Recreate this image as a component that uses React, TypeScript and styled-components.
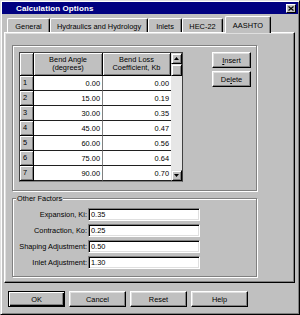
import React from 'react';
import styled, { createGlobalStyle } from 'styled-components';

const GlobalStyle = createGlobalStyle`
  html, body {
    margin: 0;
    padding: 0;
    background: #c0c0c0;
  }
  body {
    font-family: "Liberation Sans", Arial, sans-serif;
    font-size: 7.4px;
    color: #000;
  }
`;

const Window = styled.div`
  box-sizing: border-box;
  width: 300px;
  height: 315px;
  padding: 1px;
  background: #c0c0c0;
  border: 1px solid;
  border-color: #dfdfdf #000 #000 #dfdfdf;
  box-shadow: inset 1px 1px #fff, inset -1px -1px #808080;
  display: flex;
  flex-direction: column;
`;

const TitleBar = styled.div`
  height: 12px;
  background: #000080;
  display: flex;
  align-items: center;
  justify-content: space-between;
  padding: 0 2px 0 14px;
`;

const TitleText = styled.span`
  color: #fff;
  font-weight: bold;
  font-size: 8px;
  letter-spacing: 0.1px;
`;

const CloseBox = styled.div`
  box-sizing: border-box;
  width: 10px;
  height: 9px;
  background: #c0c0c0;
  border: 1px solid;
  border-color: #fff #000 #000 #fff;
  display: flex;
  align-items: center;
  justify-content: center;
`;

const TabRow = styled.div`
  display: flex;
  align-items: flex-end;
  height: 16px;
  margin-top: 2px;
  padding-left: 5px;
  position: relative;
  z-index: 1;
`;

const Tab = styled.div<{ $w: number; $active?: boolean }>`
  box-sizing: border-box;
  width: ${(p) => p.$w}px;
  height: ${(p) => (p.$active ? 17 : 14)}px;
  margin: ${(p) => (p.$active ? '0 0 -1px 2px' : '0')};
  background: #c0c0c0;
  border: 1px solid;
  border-color: #fff #000 transparent #fff;
  border-bottom: none;
  border-radius: 2px 2px 0 0;
  box-shadow: inset -1px 0 #808080;
  display: flex;
  align-items: center;
  justify-content: center;
  padding-top: ${(p) => (p.$active ? 0 : 1)}px;
  white-space: nowrap;
`;

const Panel = styled.div`
  box-sizing: border-box;
  width: 291px;
  height: 251px;
  margin-left: 2px;
  border: 1px solid;
  border-color: #fff #000 #000 #fff;
  box-shadow: inset -1px -1px #808080, inset 1px 1px #dfdfdf;
  padding: 12px 0 0 7px;
  display: flex;
  flex-direction: column;
  gap: 7px;
`;

const GroupBox = styled.div<{ $h: number }>`
  box-sizing: border-box;
  position: relative;
  width: 245px;
  height: ${(p) => p.$h}px;
  border: 1px solid #808080;
  box-shadow: inset 1px 1px #fff, 1px 1px #fff;
`;

const GroupLabel = styled.span`
  position: absolute;
  top: -5px;
  left: 3px;
  padding: 0 1px;
  background: #c0c0c0;
  line-height: 9px;
`;

const TableArea = styled.div`
  display: flex;
  padding: 6px 0 0 6px;
`;

const GridFrame = styled.div`
  box-sizing: border-box;
  width: 164px;
  height: 130px;
  border: 1px solid;
  border-color: #404040 #404040 #808080 #404040;
  display: flex;
`;

const Grid = styled.div`
  display: grid;
  grid-template-columns: 14px 69px 68px;
  grid-template-rows: 23px repeat(7, 15px);
`;

const HeadCell = styled.div<{ $left?: boolean }>`
  box-sizing: border-box;
  background: #c0c0c0;
  border-right: 1px solid #000;
  border-bottom: 1px solid #000;
  box-shadow: inset 1px 1px #fff, inset -1px -1px #808080;
  display: flex;
  align-items: center;
  justify-content: ${(p) => (p.$left ? 'flex-start' : 'center')};
  padding-left: ${(p) => (p.$left ? 3 : 0)}px;
  text-align: center;
  line-height: 8.5px;
`;

const Cell = styled.div<{ $divider?: boolean }>`
  box-sizing: border-box;
  background: #fff;
  border-bottom: 1px solid #202020;
  border-right: ${(p) => (p.$divider ? '1px solid #808080' : 'none')};
  display: flex;
  align-items: center;
  justify-content: flex-end;
  padding-right: 2px;
`;

const ScrollBar = styled.div`
  width: 11px;
  display: flex;
  flex-direction: column;
  background: #e6e6e6;
`;

const ScrollPart = styled.div<{ $h: number }>`
  box-sizing: border-box;
  height: ${(p) => p.$h}px;
  background: #c0c0c0;
  border: 1px solid;
  border-color: #dfdfdf #000 #000 #dfdfdf;
  box-shadow: inset 1px 1px #fff, inset -1px -1px #808080;
  display: flex;
  align-items: center;
  justify-content: center;
`;

const Track = styled.div`
  flex: 1;
`;

const SideButtons = styled.div`
  display: flex;
  flex-direction: column;
  gap: 3px;
  margin-left: 29px;
`;

const Button = styled.div<{ $w: number; $default?: boolean }>`
  box-sizing: border-box;
  width: ${(p) => p.$w}px;
  height: 16px;
  background: #c0c0c0;
  border: 1px solid;
  border-color: ${(p) => (p.$default ? '#000' : '#fff #000 #000 #fff')};
  box-shadow: ${(p) =>
    p.$default
      ? 'inset 1px 1px #fff, inset -1px -1px #000, inset -2px -2px #808080'
      : 'inset -1px -1px #808080, inset 1px 1px #dfdfdf'};
  display: flex;
  align-items: center;
  justify-content: center;
`;

const FactorGrid = styled.div`
  display: grid;
  grid-template-columns: 74px 112px;
  grid-auto-rows: 13px;
  column-gap: 1px;
  row-gap: 3px;
  padding-top: 9px;
`;

const FactorLabel = styled.label`
  display: flex;
  align-items: center;
  justify-content: flex-end;
  white-space: nowrap;
`;

const FactorInput = styled.div`
  box-sizing: border-box;
  background: #fff;
  border: 1px solid;
  border-color: #808080 #fff #fff #808080;
  box-shadow: inset 1px 1px #000, inset -1px -1px #dfdfdf;
  display: flex;
  align-items: center;
  padding-left: 2px;
`;

const ButtonRow = styled.div`
  display: flex;
  gap: 4px;
  margin-top: 8px;
  padding-left: 6px;
`;

const Arrow = ({ down }: { down?: boolean }) => (
  <svg width="5" height="3" viewBox="0 0 5 3">
    <polygon points={down ? '0,0 5,0 2.5,3' : '2.5,0 5,3 0,3'} fill="#000" />
  </svg>
);

const rows = [
  ['0.00', '0.00'],
  ['15.00', '0.19'],
  ['30.00', '0.35'],
  ['45.00', '0.47'],
  ['60.00', '0.56'],
  ['75.00', '0.64'],
  ['90.00', '0.70'],
];

const factors = [
  ['Expansion, Ki:', '0.35'],
  ['Contraction, Ko:', '0.25'],
  ['Shaping Adjustment:', '0.50'],
  ['Inlet Adjustment:', '1.30'],
];

const tabs: [string, number][] = [
  ['General', 43],
  ['Hydraulics and Hydrology', 98],
  ['Inlets', 34],
  ['HEC-22', 41],
];

const App: React.FC = () => (
  <>
    <GlobalStyle />
    <Window>
      <TitleBar>
        <TitleText>Calculation Options</TitleText>
        <CloseBox>
          <svg width="6" height="5" viewBox="0 0 6 5">
            <path d="M0.5 0.5 L5.5 4.5 M5.5 0.5 L0.5 4.5" stroke="#000" strokeWidth="1.2" />
          </svg>
        </CloseBox>
      </TitleBar>
      <TabRow>
        {tabs.map(([label, w]) => (
          <Tab key={label} $w={w}>{label}</Tab>
        ))}
        <Tab $w={46} $active>AASHTO</Tab>
      </TabRow>
      <Panel>
        <GroupBox $h={146}>
          <TableArea>
            <GridFrame>
              <Grid>
                <HeadCell />
                <HeadCell>Bend Angle<br />(degrees)</HeadCell>
                <HeadCell>Bend Loss<br />Coefficient, Kb</HeadCell>
                {rows.map(([angle, coef], i) => (
                  <React.Fragment key={angle}>
                    <HeadCell $left>{i + 1}</HeadCell>
                    <Cell $divider>{angle}</Cell>
                    <Cell>{coef}</Cell>
                  </React.Fragment>
                ))}
              </Grid>
              <ScrollBar>
                <ScrollPart $h={11}><Arrow /></ScrollPart>
                <ScrollPart $h={12} />
                <Track />
                <ScrollPart $h={11}><Arrow down /></ScrollPart>
              </ScrollBar>
            </GridFrame>
            <SideButtons>
              <Button $w={39}><span><u>I</u>nsert</span></Button>
              <Button $w={39}><span>De<u>l</u>ete</span></Button>
            </SideButtons>
          </TableArea>
        </GroupBox>
        <GroupBox $h={79}>
          <GroupLabel>Other Factors</GroupLabel>
          <FactorGrid>
            {factors.map(([label, value]) => (
              <React.Fragment key={label}>
                <FactorLabel>{label}</FactorLabel>
                <FactorInput>{value}</FactorInput>
              </React.Fragment>
            ))}
          </FactorGrid>
        </GroupBox>
      </Panel>
      <ButtonRow>
        <Button $w={57} $default>OK</Button>
        <Button $w={57}>Cancel</Button>
        <Button $w={57}>Reset</Button>
        <Button $w={57}>Help</Button>
      </ButtonRow>
    </Window>
  </>
);

export default App;
